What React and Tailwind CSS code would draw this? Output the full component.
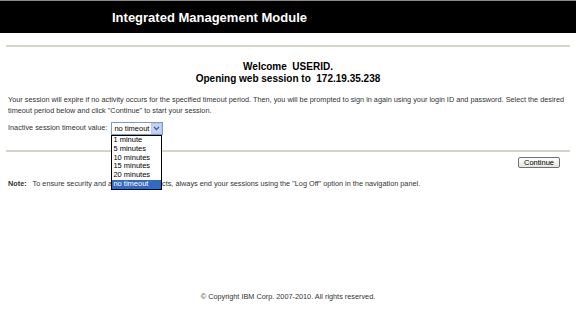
import React from 'react';

const options = ['1 minute', '5 minutes', '10 minutes', '15 minutes', '20 minutes', 'no timeout'];

function TimeoutSelect() {
  return (
    <div className="relative inline-block">
      <div className="flex items-center h-[13px] w-[52px] border border-[#7f9db9] bg-white">
        <span className="flex-1 pl-[2px] text-[7.5px] leading-[11px] text-black">no timeout</span>
        <span className="flex items-center justify-center w-[11px] h-[11px] bg-[#c1d3fb] border border-[#b6c8f2]">
          <svg width="7" height="5" viewBox="0 0 7 5"><path d="M1 1 L3.5 3.5 L6 1" stroke="#4d6185" strokeWidth="1.4" fill="none" /></svg>
        </span>
      </div>
      <ul className="absolute left-0 top-[13px] w-[51px] border border-black bg-white z-10">
        {options.map((o) => (
          <li key={o} className={`pl-[1px] text-[7.5px] leading-[8.75px] ${o === 'no timeout' ? 'bg-[#316ac5] text-white' : 'text-black'}`}>{o}</li>
        ))}
      </ul>
    </div>
  );
}

export default function App() {
  return (
    <div className="w-[576px] h-[318px] bg-white flex flex-col text-[#333] font-['Liberation_Sans',Arial,sans-serif]">
      <header className="h-[33px] bg-black flex items-center pl-[112px] pt-[2px] border-t border-[#888]">
        <h1 className="text-[13px] font-bold text-white">Integrated Management Module</h1>
      </header>

      <div className="px-[6px] pt-[12px]">
        <div className="h-[2px] bg-[#d6d3c9]" />
      </div>

      <div className="mt-[14px] text-center font-bold text-black text-[10px] leading-[12px]">
        <p>Welcome&nbsp; USERID.</p>
        <p>Opening web session to&nbsp; 172.19.35.238</p>
      </div>

      <p className="mt-[9px] px-[8px] text-[7.3px] leading-[11px] text-[#333]">
        Your session will expire if no activity occurs for the specified timeout period. Then, you will be prompted to sign in again using your login ID and password. Select the desired timeout period below and click "Continue" to start your session.
      </p>

      <div className="mt-[6px] pl-[8px] flex items-center gap-[4px] text-[7.3px]">
        <span>Inactive session timeout value:</span>
        <TimeoutSelect />
      </div>

      <div className="px-[6px] mt-[15px]">
        <div className="h-[2px] bg-[#d6d3c9]" />
      </div>

      <div className="flex justify-end pr-[16px] mt-[5px]">
        <button className="h-[11px] w-[42px] text-[7.5px] leading-[9px] text-black border border-[#6f6f6f] rounded-[2px] bg-gradient-to-b from-white to-[#e6e6e0]">Continue</button>
      </div>

      <p className="mt-[11px] px-[8px] text-[7.3px] text-[#333]">
        <span className="font-bold">Note:</span>&nbsp;&nbsp; To ensure security and avoid login conflicts, always end your sessions using the "Log Off" option in the navigation panel.
      </p>

      <p className="mt-auto mb-[15px] text-center text-[7.3px] text-[#333]">© Copyright IBM Corp. 2007-2010. All rights reserved.</p>
    </div>
  );
}
